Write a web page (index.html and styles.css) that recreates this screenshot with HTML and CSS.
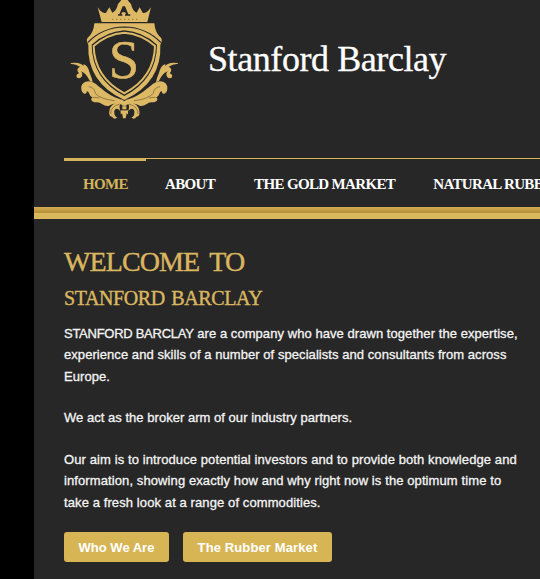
FILE: index.html
```html
<!DOCTYPE html>
<html lang="en">
<head>
    <meta charset="UTF-8">
    <meta name="viewport" content="width=device-width, initial-scale=1.0">
    <title>Stanford Barclay</title>
    <link rel="stylesheet" href="styles.css">
</head>
<body>
    <div class="page">
        <header>
            <div class="brand">
                <svg class="crest" viewBox="30 0 330 366" aria-hidden="true">
                    <!-- Crown -->
                    <path class="gold" d="M125 66 L113 22 Q126 42 138 38 L148 22 L157 38 Q169 34 174 12 Q181 5 184 0 H203 Q207 6 213 12 Q218 34 230 38 L239 22 L248 38 Q260 42 273 22 L262 66 Z"/>
                    <path class="dark" d="M188 19 h7 l10 24 h6 v4 h-16 v-4 h3 l-2 -6 h-10 l-2 6 h3 v4 h-13 v-4 h4 Z"/>
                    <path class="thin" stroke-dasharray="4 8" d="M156 58 H232"/>
                    <!-- Leaves, the right side mirrors the left -->
                    <g id="leaves">
                        <path class="gold" d="M32 189 Q62 184 76 202 Q92 218 98 246 L90 244 Q76 216 62 214 Q70 220 65 230 Q57 239 50 232 Q47 223 57 220 Q46 207 60 200 Q49 193 32 191 Z"/>
                        <path class="gold" d="M70 192 Q86 196 90 224 Q72 212 70 192 Z"/>
                        <path class="gold" d="M65 272 C58 246 84 240 96 246 C116 252 140 290 190 300 V316 C168 306 158 312 146 318 C130 320 124 306 110 307 C97 308 88 299 98 292 C86 290 90 274 80 274 C82 284 69 284 65 272 Z"/>
                        <path class="thin" d="M86 260 Q104 262 106 280 Q122 298 164 302 M100 292 Q110 292 118 294"/>
                        <path class="gold" d="M190 308 C173 309 180 326 181 335 C174 320 160 326 163 340 Q164 351 172 352 Q164 361 156 350 Q145 349 148 333 Q150 312 177 306 Z"/>
                        <path class="thin" d="M152 342 Q151 320 179 312"/>
                    </g>
                    <use href="#leaves" transform="translate(386 0) scale(-1 1)"/>
                    <path class="gold" d="M187 303 h12 v25 h-12 Z M182 331 h22 v12 q-3 0 -4 -4 l-3 16 h-8 l-3 -16 q-1 4 -4 4 Z"/>
                    <path class="thin" d="M186 318 H200 M185 330 H201"/>
                    <!-- Shield -->
                    <path class="gold" d="M103 70 H283 Q285 99 304 115 Q308 123 301 134 Q306 247 193 300 Q80 247 85 134 Q78 123 82 115 Q101 99 103 70 Z"/>
                    <path class="line" d="M83 128 Q127 82 193 81 Q259 82 303 128"/>
                    <path class="dark" d="M193 91 Q137 95 95 134 Q96 237 193 288 Q290 237 291 134 Q249 95 193 91 Z"/>
                    <path class="ring" d="M193 98 Q141 102 101 138 Q103 232 193 280 Q283 232 285 138 Q245 102 193 98 Z"/>
                    <text class="initial" x="192" y="234" text-anchor="middle">S</text>
                </svg>
                <div class="name">Stanford Barclay</div>
            </div>
            <nav>
                <a class="active" href="#">HOME</a>
                <a href="#">ABOUT</a>
                <a href="#">THE GOLD MARKET</a>
                <a href="#">NATURAL RUBBER</a>
            </nav>
        </header>

        <div class="band"></div>

        <main>
            <h1>WELCOME TO</h1>
            <h2>STANFORD BARCLAY</h2>
            <p class="intro"><span class="caps">STANFORD BARCLAY</span> are a company who have drawn together the expertise,<br>
            experience and skills of a number of specialists and consultants from across<br>
            Europe.</p>
            <p>We act as the broker arm of our industry partners.</p>
            <p class="aim">Our aim is to introduce potential investors and to provide both knowledge and<br>
            information, showing exactly how and why right now is the optimum time to<br>
            take a fresh look at a range of commodities.</p>
            <div class="buttons">
                <a class="who" href="#">Who We Are</a>
                <a class="rubber" href="#">The Rubber Market</a>
            </div>
        </main>
    </div>
</body>
</html>
```
FILE: styles.css
```css
* {
    box-sizing: border-box;
}

body {
    margin: 0;
    height: 579px;
    background: #000;
    font-family: "Liberation Sans", Arial, sans-serif;
    overflow: hidden;
}

a {
    text-decoration: none;
}

.page {
    margin-left: 34px;
    height: 579px;
    background: #272727;
    overflow: hidden;
}

/* Header */
header {
    height: 207px;
    padding-left: 30px;
}

.brand {
    display: flex;
    height: 158px;
    padding-left: 6px;
}

.crest {
    width: 110px;
    height: 122px;
    flex: none;
}

.gold {
    fill: #ddb966;
}

.dark {
    fill: #272727;
}

.thin {
    fill: none;
    stroke: #6e5a2f;
    stroke-width: 2;
}

.line {
    fill: none;
    stroke: #272727;
    stroke-width: 3.5;
}

.ring {
    fill: none;
    stroke: #ddb966;
    stroke-width: 6;
}

.initial {
    fill: #ddb966;
    stroke: #ddb966;
    stroke-width: 1.5;
    font-family: "Liberation Serif", "Times New Roman", serif;
    font-size: 164px;
}

.name {
    margin: 38px 0 0 28px;
    color: #fff;
    font: 36px/42px "Liberation Serif", "Times New Roman", serif;
    letter-spacing: -0.42px;
    white-space: nowrap;
    -webkit-text-stroke: 0.3px #fff;
}

/* Navigation */
nav {
    display: flex;
    width: 700px;
    border-top: 1px solid #d5b55c;
}

nav a {
    padding: 15px 19px 0;
    color: #fff;
    font: bold 15px/20px "Liberation Serif", "Times New Roman", serif;
    letter-spacing: -0.65px;
    white-space: nowrap;
}

nav a:nth-child(3) {
    padding-left: 20px;
}

nav .active {
    width: 82px;
    margin-top: -1px;
    border-top: 3px solid #d5b55c;
    padding-top: 13px;
    color: #d5b55c;
}

.band {
    height: 12px;
    background: linear-gradient(#d6ad52, #b48d38 50%, #d8b75d 50%);
}

/* Content */
main {
    padding: 26px 0 0 30px;
    color: #f4f4f4;
}

h1, h2 {
    margin: 0;
    color: #dab660;
    font-family: "Liberation Serif", "Times New Roman", serif;
    font-weight: normal;
    -webkit-text-stroke: 0.4px #dab660;
}

h1 {
    font-size: 28px;
    line-height: 34px;
    letter-spacing: -0.9px;
    word-spacing: 4.5px;
}

h2 {
    margin: 7px 0 12.5px;
    font-size: 20px;
    line-height: 24px;
    letter-spacing: -0.4px;
    word-spacing: 2px;
}

p {
    margin: 0 0 20px;
    font-size: 13px;
    line-height: 21.5px;
    letter-spacing: 0.03px;
    white-space: nowrap;
    -webkit-text-stroke: 0.3px #f4f4f4;
}

.intro {
    letter-spacing: 0.06px;
}

.caps {
    letter-spacing: -0.27px;
}

.aim {
    margin-bottom: 18.5px;
    letter-spacing: 0.1px;
}

.buttons {
    display: flex;
    gap: 14px;
}

.buttons a {
    height: 30px;
    border-radius: 3px;
    background: #d7b555;
    color: #fff;
    font-size: 13px;
    font-weight: bold;
    line-height: 31px;
    text-align: center;
}

.who {
    width: 105px;
}

.rubber {
    width: 149px;
    letter-spacing: 0.12px;
}
```
